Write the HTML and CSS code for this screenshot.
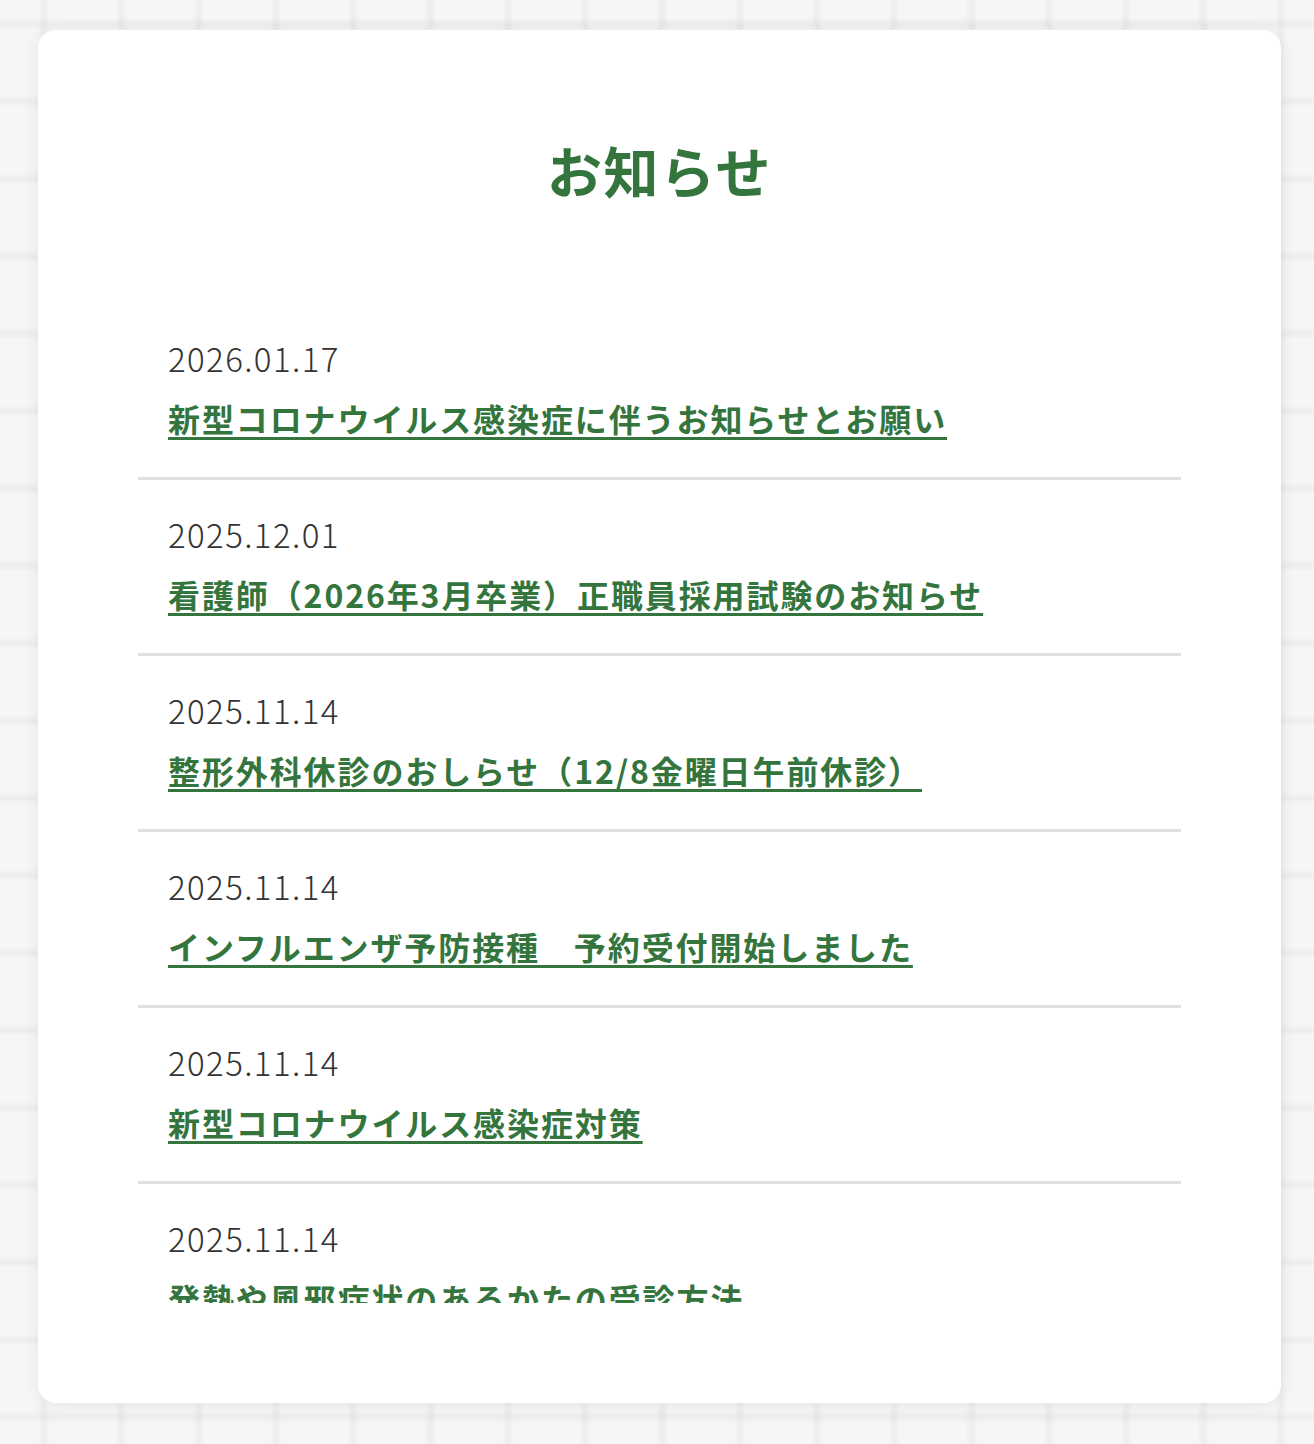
FILE: index.html
```html
<!DOCTYPE html>
<html lang="ja">
<head>
<meta charset="utf-8">
<title>お知らせ</title>
<link rel="stylesheet" href="styles.css">
</head>
<body>
<main class="card">
  <h1 class="title">お知らせ</h1>
  <ul class="news">
    <li class="news-item">
      <div class="news-date">2026.01.17</div>
      <a class="news-link" href="#">新型コロナウイルス感染症に伴うお知らせとお願い</a>
    </li>
    <li class="news-item">
      <div class="news-date">2025.12.01</div>
      <a class="news-link" href="#">看護師（2026年3月卒業）正職員採用試験のお知らせ</a>
    </li>
    <li class="news-item">
      <div class="news-date">2025.11.14</div>
      <a class="news-link" href="#">整形外科休診のおしらせ（12/8金曜日午前休診）</a>
    </li>
    <li class="news-item">
      <div class="news-date">2025.11.14</div>
      <a class="news-link" href="#">インフルエンザ予防接種　予約受付開始しました</a>
    </li>
    <li class="news-item">
      <div class="news-date">2025.11.14</div>
      <a class="news-link" href="#">新型コロナウイルス感染症対策</a>
    </li>
    <li class="news-item">
      <div class="news-date">2025.11.14</div>
      <a class="news-link" href="#">発熱や風邪症状のあるかたの受診方法</a>
    </li>
  </ul>
</main>
</body>
</html>
```

FILE: styles.css
```css
html {
  background-color: #f6f7f5;
  background-image:
    linear-gradient(to right, rgba(0,0,0,0) 38px, rgba(0,0,0,0.03) 43px, rgba(0,0,0,0.03) 45px, rgba(0,0,0,0) 50px),
    linear-gradient(to bottom, rgba(0,0,0,0) 18px, rgba(0,0,0,0.03) 23px, rgba(0,0,0,0.03) 25px, rgba(0,0,0,0) 30px);
  background-size: 77.3px 77.4px;
}

body {
  margin: 0;
  padding: 30px 33px 41px 38px;
  font-family: "Noto Sans CJK JP", "Noto Sans", sans-serif;
  color: #333;
}

.card {
  background: #fff;
  border-radius: 18px;
  box-shadow: 0 2px 18px rgba(0, 0, 0, 0.07);
  padding: 100px;
}

.title {
  margin: 0 0 96px;
  text-align: center;
  font-size: 55px;
  line-height: 78px;
  font-weight: 700;
  letter-spacing: 1.5px;
  color: #34753d;
}

.news {
  list-style: none;
  margin: 0;
  padding: 0;
  max-height: 999px;
  overflow: hidden;
}

.news-item {
  padding: 30px 30px 36px;
  border-bottom: 3px solid #e0e0e0;
}

.news-date {
  font-size: 33px;
  line-height: 48px;
  font-weight: 300;
  letter-spacing: 1.4px;
  color: #333;
}

.news-link {
  display: inline-block;
  margin-top: 14px;
  font-size: 32px;
  line-height: 45px;
  font-weight: 700;
  letter-spacing: 1.9px;
  color: #34753d;
  text-decoration: underline;
  text-decoration-thickness: 3px;
  text-underline-offset: 5px;
}
```
